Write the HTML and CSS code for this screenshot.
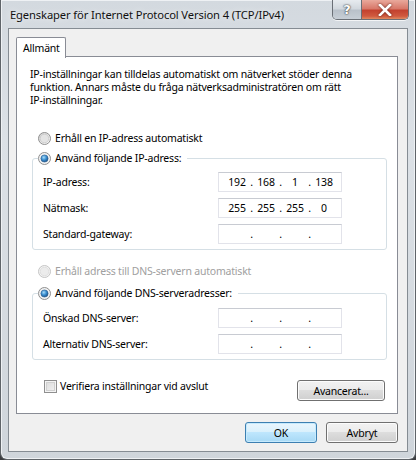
FILE: index.html
```html
<!DOCTYPE html>
<html lang="sv">
<head>
<meta charset="utf-8">
<title>Egenskaper för Internet Protocol Version 4 (TCP/IPv4)</title>
<link rel="stylesheet" href="styles.css">
</head>
<body>
<div class="window">
  <div class="titlebar">
    <div class="title">Egenskaper för Internet Protocol Version 4 (TCP/IPv4)</div>
    <div class="caption-buttons">
      <div class="cap-btn help">?</div>
      <div class="cap-btn close">
        <svg width="14" height="12" viewBox="0 0 14 12"><path d="M2 1 L12 11 M12 1 L2 11" stroke="#fff" stroke-width="2.6" stroke-linecap="square"/></svg>
      </div>
    </div>
  </div>
  <div class="client">
    <div class="tabs">
      <div class="tab">Allmänt</div>
    </div>
    <div class="panel">
      <p class="intro">IP-inställningar kan tilldelas automatiskt om nätverket stöder denna<br>funktion. Annars måste du fråga nätverksadministratören om rätt<br>IP-inställningar.</p>

      <div class="radio-row first">
        <svg class="radio" width="13" height="13" viewBox="0 0 13 13"><defs><linearGradient id="rg1" x1="0" y1="0" x2="1" y2="1"><stop offset="0" stop-color="#cfcfcf"/><stop offset="1" stop-color="#ffffff"/></linearGradient></defs><circle cx="6.5" cy="6.5" r="6" fill="url(#rg1)" stroke="#8f8f8f"/><circle cx="6.5" cy="6.5" r="4.3" fill="#e4e4e4" stroke="#c8c8c8" stroke-width="0.8"/></svg>
        <span>Erhåll en IP-adress automatiskt</span>
      </div>

      <fieldset class="group g1">
        <legend>
          <svg class="radio" width="13" height="13" viewBox="0 0 13 13"><defs><radialGradient id="rd1" cx="0.4" cy="0.35" r="0.7"><stop offset="0" stop-color="#a9dcf8"/><stop offset="0.5" stop-color="#3a8ed0"/><stop offset="1" stop-color="#1b4f82"/></radialGradient></defs><circle cx="6.5" cy="6.5" r="6" fill="#f2f2f2" stroke="#8f8f8f"/><circle cx="6.5" cy="6.5" r="3.6" fill="url(#rd1)" stroke="#2c5d8f" stroke-width="0.6"/></svg>
          <span>Använd följande IP-adress:</span>
        </legend>
        <div class="field-row">
          <span class="label">IP-adress:</span>
          <div class="ipbox"><span class="oct">192</span><span class="dot">.</span><span class="oct">168</span><span class="dot">.</span><span class="oct">1</span><span class="dot">.</span><span class="oct">138</span></div>
        </div>
        <div class="field-row">
          <span class="label">Nätmask:</span>
          <div class="ipbox"><span class="oct">255</span><span class="dot">.</span><span class="oct">255</span><span class="dot">.</span><span class="oct">255</span><span class="dot">.</span><span class="oct">0</span></div>
        </div>
        <div class="field-row">
          <span class="label">Standard-gateway:</span>
          <div class="ipbox"><span class="oct"></span><span class="dot">.</span><span class="oct"></span><span class="dot">.</span><span class="oct"></span><span class="dot">.</span><span class="oct"></span></div>
        </div>
      </fieldset>

      <div class="radio-row disabled">
        <svg class="radio" width="13" height="13" viewBox="0 0 13 13"><circle cx="6.5" cy="6.5" r="6" fill="#f4f4f4" stroke="#c4c4c4"/><circle cx="6.5" cy="6.5" r="4.3" fill="#ececec" stroke="#dadada" stroke-width="0.8"/></svg>
        <span>Erhåll adress till DNS-servern automatiskt</span>
      </div>

      <fieldset class="group g2">
        <legend>
          <svg class="radio" width="13" height="13" viewBox="0 0 13 13"><defs><radialGradient id="rd2" cx="0.4" cy="0.35" r="0.7"><stop offset="0" stop-color="#a9dcf8"/><stop offset="0.5" stop-color="#3a8ed0"/><stop offset="1" stop-color="#1b4f82"/></radialGradient></defs><circle cx="6.5" cy="6.5" r="6" fill="#f2f2f2" stroke="#8f8f8f"/><circle cx="6.5" cy="6.5" r="3.6" fill="url(#rd2)" stroke="#2c5d8f" stroke-width="0.6"/></svg>
          <span>Använd följande DNS-serveradresser:</span>
        </legend>
        <div class="field-row">
          <span class="label">Önskad DNS-server:</span>
          <div class="ipbox"><span class="oct"></span><span class="dot">.</span><span class="oct"></span><span class="dot">.</span><span class="oct"></span><span class="dot">.</span><span class="oct"></span></div>
        </div>
        <div class="field-row">
          <span class="label">Alternativ DNS-server:</span>
          <div class="ipbox"><span class="oct"></span><span class="dot">.</span><span class="oct"></span><span class="dot">.</span><span class="oct"></span><span class="dot">.</span><span class="oct"></span></div>
        </div>
      </fieldset>

      <div class="bottom-row">
        <label class="check-row">
          <span class="checkbox"></span>
          <span>Verifiera inställningar vid avslut</span>
        </label>
        <div class="btn adv">Avancerat...</div>
      </div>
    </div>
    <div class="dialog-buttons">
      <div class="btn default">OK</div>
      <div class="btn">Avbryt</div>
    </div>
  </div>
</div>
</body>
</html>
```

FILE: styles.css
```css
* { box-sizing: border-box; }
html, body {
  margin: 0;
  padding: 0;
  width: 416px;
  height: 460px;
  background: #3b3d40;
  overflow: hidden;
}
body {
  font-family: "Noto Sans", "Open Sans", sans-serif;
  font-size: 10.5px;
  letter-spacing: -0.2px;
  color: #000;
}
.window {
  width: 416px;
  height: 460px;
  border: 1px solid #5f6469;
  border-top: none;
  border-radius: 0 0 7px 7px;
  background: linear-gradient(180deg, #d3d9df 0%, #dce1e6 30%, #cfd5db 100%);
  box-shadow: inset 0 0 0 1px #eef1f4;
  display: flex;
  flex-direction: column;
}
.titlebar {
  height: 27px;
  display: flex;
  justify-content: space-between;
  align-items: flex-start;
  padding-left: 9px;
  padding-right: 6px;
}
.title {
  font-size: 11.2px;
  letter-spacing: -0.12px;
  line-height: 29px;
  color: #111;
  text-shadow: 0 0 6px rgba(255,255,255,0.9);
}
.caption-buttons {
  display: flex;
  height: 20px;
  border: 1px solid #6a6f76;
  border-top: none;
  border-radius: 0 0 5px 5px;
  overflow: hidden;
  box-shadow: 0 1px 0 rgba(255,255,255,0.7);
}
.cap-btn {
  height: 19px;
  display: flex;
  align-items: center;
  justify-content: center;
}
.help {
  width: 29px;
  background: linear-gradient(180deg, #e7ebef 0%, #d2d8de 45%, #b9c1ca 55%, #c7ced6 100%);
  border-right: 1px solid #6a6f76;
  color: #fff;
  font-family: "DejaVu Sans", sans-serif;
  font-weight: bold;
  font-size: 13px;
  letter-spacing: 0;
  text-shadow: 0 0 2px #333, 0 0 1px #333;
}
.close {
  width: 46px;
  background: linear-gradient(180deg, #e9a99c 0%, #d8796a 45%, #c3422f 55%, #d05a3f 85%, #e08a60 100%);
}
.close svg { filter: drop-shadow(0 0 1px #5a1d12); }

.client {
  margin: 1px 7px 0 7px;
  height: 424px;
  background: #f0f0f0;
  border: 1px solid #858c93;
  padding: 8px 9px 0 7px;
  display: flex;
  flex-direction: column;
}
.tabs {
  display: flex;
  height: 19px;
  position: relative;
  z-index: 1;
}
.tab {
  width: 50px;
  height: 21px;
  background: #fff;
  border: 1px solid #898c95;
  border-bottom: none;
  border-radius: 2px 2px 0 0;
  padding: 3px 0 0 6px;
  line-height: 14px;
}
.panel {
  height: 358px;
  background: #fff;
  border: 1px solid #898c95;
  padding: 0 10px 0 13px;
}
.intro {
  margin: 11px 0 0 0;
  line-height: 13px;
  white-space: nowrap;
}
.radio-row {
  display: flex;
  align-items: center;
  height: 14px;
  margin-left: 8px;
  gap: 4px;
}
.radio-row.first { margin-top: 24px; }
.radio-row.disabled { color: #a0a0a0; margin-top: 14px; }
.radio { display: block; flex: none; }

.group {
  margin: 6px 0 0 2px;
  border: 1px solid #d5dfe5;
  border-radius: 3px;
  padding: 0 0 5px 5px;
  min-width: 0;
}
.group legend {
  display: flex;
  align-items: center;
  gap: 4px;
  height: 14px;
  padding: 0 6px 0 0;
  margin-left: 0;
}
.g1 { padding-top: 7px; }
.g2 { padding-top: 8px; margin-top: 8px; }
.field-row {
  display: flex;
  align-items: center;
  height: 20px;
  margin-left: 5px;
}
.field-row + .field-row { margin-top: 6px; }
.label { width: 175px; flex: none; }
.ipbox {
  width: 124px;
  height: 20px;
  border: 1px solid #e2e3ea;
  border-top-color: #c8cbd2;
  background: #fff;
  display: flex;
  justify-content: center;
  align-items: center;
  padding-left: 1px;
}
.oct { width: 22px; text-align: center; }
.dot { width: 7px; text-align: center; }

.bottom-row {
  display: flex;
  justify-content: space-between;
  align-items: flex-start;
  margin-top: 20px;
  padding-left: 14px;
  padding-right: 2px;
}
.check-row {
  display: flex;
  align-items: center;
  gap: 3px;
  height: 12px;
  margin-top: 0;
}
.checkbox {
  width: 13px;
  height: 13px;
  flex: none;
  border: 1px solid #8f8f8f;
  background: linear-gradient(135deg, #d9d9d9 0%, #f4f4f4 100%);
  box-shadow: inset 0 0 0 1px #f4f4f4, inset 0 0 0 2px #d0d0d0;
}
.btn {
  width: 72px;
  height: 21px;
  border: 1px solid #707070;
  border-radius: 3px;
  background: linear-gradient(180deg, #f2f2f2 0%, #ebebeb 49%, #dddddd 50%, #cfcfcf 100%);
  box-shadow: inset 0 0 0 1px #fcfcfc;
  display: flex;
  align-items: center;
  justify-content: center;
}
.btn.adv { width: 88px; }
.btn.default {
  border-color: #3c7fb1;
  background: linear-gradient(180deg, #eaf6fd 0%, #d9f0fc 49%, #bee6fd 50%, #a7d9f5 100%);
  box-shadow: inset 0 0 0 1px #c6eafd;
}
.dialog-buttons {
  display: flex;
  justify-content: flex-end;
  gap: 9px;
  margin-top: 8px;
}
```
